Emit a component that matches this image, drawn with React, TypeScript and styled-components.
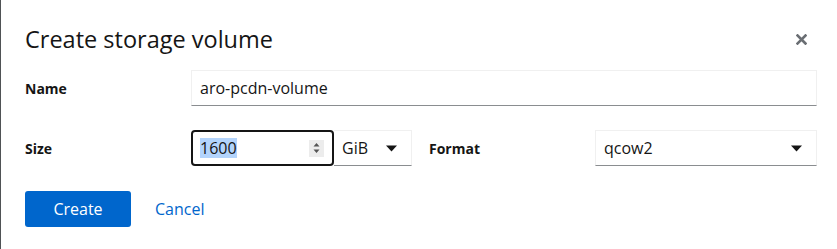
import React from 'react';
import styled, { createGlobalStyle } from 'styled-components';

const GlobalStyle = createGlobalStyle`
  html, body {
    margin: 0;
    padding: 0;
    background: #ffffff;
  }
  body {
    font-family: "Open Sans", "Noto Sans", sans-serif;
    color: #151515;
  }
`;

const Dialog = styled.div`
  box-sizing: border-box;
  width: 837px;
  height: 249px;
  border-left: 1px solid #4f5255;
  padding: 24px 20px 0 24px;
  background: #fff;
`;

const Header = styled.div`
  display: flex;
  align-items: center;
  justify-content: space-between;
  height: 31px;
  margin-bottom: 15px;
`;

const Title = styled.h1`
  margin: 0;
  font-size: 23.5px;
  font-weight: 500;
  line-height: 31px;
  color: #151515;
`;

const CloseButton = styled.button`
  display: flex;
  align-items: center;
  justify-content: center;
  width: 24px;
  height: 24px;
  margin-right: 4px;
  padding: 0;
  border: none;
  background: transparent;
  color: #6a6e73;
`;

const Form = styled.div`
  display: grid;
  grid-template-columns: 166px 221px 17px 166px 1fr;
  row-gap: 24px;
  align-items: center;
  width: 792px;
`;

const Label = styled.label<{ $col?: number }>`
  grid-column: ${(p) => p.$col ?? 1};
  font-size: 14px;
  font-weight: 700;
  color: #151515;
`;

const TextInput = styled.div<{ $span?: string }>`
  grid-column: ${(p) => p.$span ?? 'auto'};
  box-sizing: border-box;
  height: 36px;
  display: flex;
  align-items: center;
  padding: 0 8px;
  border: 1px solid #f0f0f0;
  border-bottom-color: #8a8d90;
  font-size: 16px;
  color: #151515;
`;

const SizeGroup = styled.div`
  grid-column: 2;
  display: flex;
  height: 36px;
`;

const NumberInput = styled.div`
  box-sizing: border-box;
  width: 143px;
  height: 36px;
  display: flex;
  align-items: center;
  justify-content: space-between;
  padding: 0 8px 0 7px;
  border: 2px solid #151515;
  border-radius: 4px;
  font-size: 16px;
`;

const Selected = styled.span`
  background: #b3d4fc;
  line-height: 20px;
`;

const Spinner = styled.span`
  display: flex;
  align-items: center;
  justify-content: center;
  width: 15px;
  height: 17px;
  background: #ececec;
  color: #555;
`;

const Select = styled.div<{ $col?: number; $grow?: boolean }>`
  grid-column: ${(p) => p.$col ?? 'auto'};
  box-sizing: border-box;
  height: 36px;
  flex: ${(p) => (p.$grow ? '1' : 'none')};
  display: flex;
  align-items: center;
  justify-content: space-between;
  padding: 0 14px 0 8px;
  border: 1px solid #f0f0f0;
  border-bottom-color: #8a8d90;
  border-left: ${(p) => (p.$grow ? 'none' : '1px solid #f0f0f0')};
  font-size: 16px;
  color: #151515;
`;

const Actions = styled.div`
  display: flex;
  align-items: center;
  gap: 24px;
  margin-top: 25px;
`;

const PrimaryButton = styled.button`
  box-sizing: border-box;
  width: 106px;
  height: 36px;
  border: none;
  border-radius: 3px;
  background: #0066cc;
  color: #fff;
  font-family: inherit;
  font-size: 16px;
`;

const LinkButton = styled.button`
  border: none;
  background: transparent;
  padding: 0;
  color: #0066cc;
  font-family: inherit;
  font-size: 16px;
`;

const Caret = () => (
  <svg width="11" height="7" viewBox="0 0 11 7">
    <path d="M0 0.5h11L5.5 6.5z" fill="#151515" />
  </svg>
);

const App = () => (
  <>
    <GlobalStyle />
    <Dialog>
      <Header>
        <Title>Create storage volume</Title>
        <CloseButton aria-label="Close">
          <svg width="11" height="11" viewBox="0 0 11 11">
            <path d="M1.5 1.5l8 8M9.5 1.5l-8 8" stroke="currentColor" strokeWidth="2.6" strokeLinecap="square" />
          </svg>
        </CloseButton>
      </Header>
      <Form>
        <Label>Name</Label>
        <TextInput $span="2 / 6">aro-pcdn-volume</TextInput>

        <Label>Size</Label>
        <SizeGroup>
          <NumberInput>
            <Selected>1600</Selected>
            <Spinner>
              <svg width="7" height="12" viewBox="0 0 7 12">
                <path d="M0.5 4.5L3.5 1l3 3.5zM0.5 7.5l3 3.5 3-3.5z" fill="currentColor" />
              </svg>
            </Spinner>
          </NumberInput>
          <Select $grow>
            <span>GiB</span>
            <Caret />
          </Select>
        </SizeGroup>
        <Label $col={4}>Format</Label>
        <Select $col={5}>
          <span>qcow2</span>
          <Caret />
        </Select>
      </Form>
      <Actions>
        <PrimaryButton>Create</PrimaryButton>
        <LinkButton>Cancel</LinkButton>
      </Actions>
    </Dialog>
  </>
);

export default App;
